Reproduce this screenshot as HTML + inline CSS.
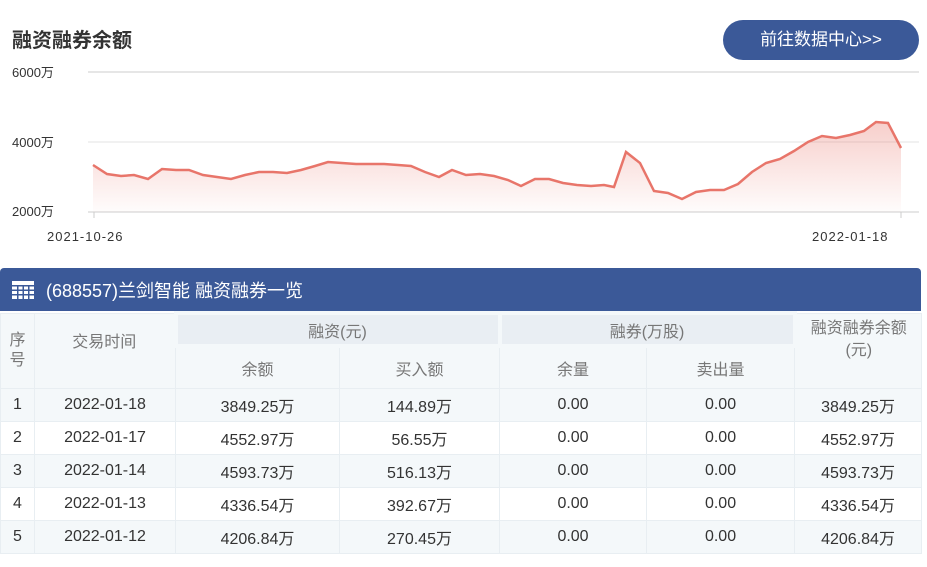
<!DOCTYPE html>
<html><head><meta charset="utf-8"><style>
*{margin:0;padding:0;box-sizing:border-box}
body{width:927px;height:567px;background:#fff;font-family:"Liberation Sans","Noto Sans CJK SC",sans-serif;position:relative;overflow:hidden;color:#333}
.title{position:absolute;left:12px;top:24px;font-size:20px;font-weight:bold;color:#333}
.btn{position:absolute;left:723px;top:20px;width:196px;height:40px;border-radius:20px;background:#3b5998;color:#fff;font-size:17px;line-height:40px;text-align:center}
.hdr{position:absolute;left:0;top:268px;width:921px;height:43px;background:#3b5998;color:#fff;font-size:18px;line-height:47px;padding-left:46px;border-radius:4px 4px 0 0}
table{position:absolute;left:0;top:311px;width:921px;border-collapse:collapse;font-size:16px;table-layout:fixed}
td{text-align:center;height:33px;border:1px solid #e8eef2;color:#333}
.h td{color:#777;background:#f4f8fa;font-size:16px}
tr.o td{background:#f4f8fa}
</style></head><body>
<div class="title">融资融券余额</div>
<div class="btn">前往数据中心&gt;&gt;</div>
<svg width="927" height="260" style="position:absolute;left:0;top:0">
<defs><linearGradient id="g" x1="0" y1="0" x2="0" y2="1"><stop offset="0" stop-color="#e8756a" stop-opacity="0.35"/><stop offset="1" stop-color="#e8756a" stop-opacity="0.02"/></linearGradient></defs>
<line x1="88" y1="72" x2="919" y2="72" stroke="#ccc"/>
<line x1="88" y1="142" x2="919" y2="142" stroke="#e3e3e3"/>
<line x1="88" y1="212" x2="919" y2="212" stroke="#ccc"/>
<line x1="94" y1="212" x2="94" y2="218" stroke="#ccc"/><line x1="901" y1="212" x2="901" y2="218" stroke="#ccc"/>
<g font-size="13" fill="#333" font-family="Liberation Sans,Noto Sans CJK SC,sans-serif">
<text x="12" y="77">6000万</text><text x="12" y="147">4000万</text><text x="12" y="216">2000万</text>
<text x="47" y="241" letter-spacing="1">2021-10-26</text><text x="812" y="241" letter-spacing="1">2022-01-18</text></g>
<path d="M93,212 L93,165 107,174 121,176 134,175 148,179 162,169 176,170 189,170 203,175 217,177 231,179 245,175 259,172 273,172 287,173 301,170 315,166 328,162 342,163 356,164 370,164 384,164 398,165 411,166 425,172 439,177 452,170 466,175 480,174 494,176 508,180 521,186 535,179 549,179 563,183 577,185 591,186 604,185 614,187 626,152 640,163 654,191 668,193 682,199 696,192 710,190 724,190 738,184 752,172 766,163 780,159 794,151 808,142 822,136 836,138 850,135 864,131 876,122 888,123 901,148 L901,212 Z" fill="url(#g)"/>
<polyline fill="none" stroke="#e8756a" stroke-width="2.5" points="93,165 107,174 121,176 134,175 148,179 162,169 176,170 189,170 203,175 217,177 231,179 245,175 259,172 273,172 287,173 301,170 315,166 328,162 342,163 356,164 370,164 384,164 398,165 411,166 425,172 439,177 452,170 466,175 480,174 494,176 508,180 521,186 535,179 549,179 563,183 577,185 591,186 604,185 614,187 626,152 640,163 654,191 668,193 682,199 696,192 710,190 724,190 738,184 752,172 766,163 780,159 794,151 808,142 822,136 836,138 850,135 864,131 876,122 888,123 901,148"/>
</svg>
<div class="hdr">(688557)兰剑智能 融资融券一览</div>
<svg width="22" height="18" style="position:absolute;left:12px;top:281px"><rect x="0" y="0" width="22" height="18" fill="#fff"/><g fill="#3b5998"><rect x="0" y="4" width="22" height="1.5"/><rect x="0" y="8.5" width="22" height="1.5"/><rect x="0" y="13" width="22" height="1.5"/><rect x="5" y="4" width="1.5" height="14"/><rect x="10.5" y="4" width="1.5" height="14"/><rect x="16" y="4" width="1.5" height="14"/></g></svg>
<table>
<colgroup><col style="width:34px"><col style="width:141px"><col style="width:164px"><col style="width:160px"><col style="width:147px"><col style="width:148px"><col style="width:127px"></colgroup>
<tr class="h"><td rowspan="2" style="line-height:20px">序<br>号</td><td rowspan="2" style="vertical-align:top;padding-top:14px">交易时间</td><td colspan="2" style="background:#e9eef3;border:4px solid #f4f8fa">融资(元)</td><td colspan="2" style="background:#e9eef3;border:4px solid #f4f8fa">融券(万股)</td><td rowspan="2" style="vertical-align:top;padding-top:4px;line-height:22px">融资融券余额<br>(元)</td></tr>
<tr class="h"><td style="height:42px">余额</td><td>买入额</td><td>余量</td><td>卖出量</td></tr>
<tr class="o"><td>1</td><td>2022-01-18</td><td>3849.25万</td><td>144.89万</td><td>0.00</td><td>0.00</td><td>3849.25万</td></tr>
<tr><td>2</td><td>2022-01-17</td><td>4552.97万</td><td>56.55万</td><td>0.00</td><td>0.00</td><td>4552.97万</td></tr>
<tr class="o"><td>3</td><td>2022-01-14</td><td>4593.73万</td><td>516.13万</td><td>0.00</td><td>0.00</td><td>4593.73万</td></tr>
<tr><td>4</td><td>2022-01-13</td><td>4336.54万</td><td>392.67万</td><td>0.00</td><td>0.00</td><td>4336.54万</td></tr>
<tr class="o"><td>5</td><td>2022-01-12</td><td>4206.84万</td><td>270.45万</td><td>0.00</td><td>0.00</td><td>4206.84万</td></tr>
</table>
</body></html>
